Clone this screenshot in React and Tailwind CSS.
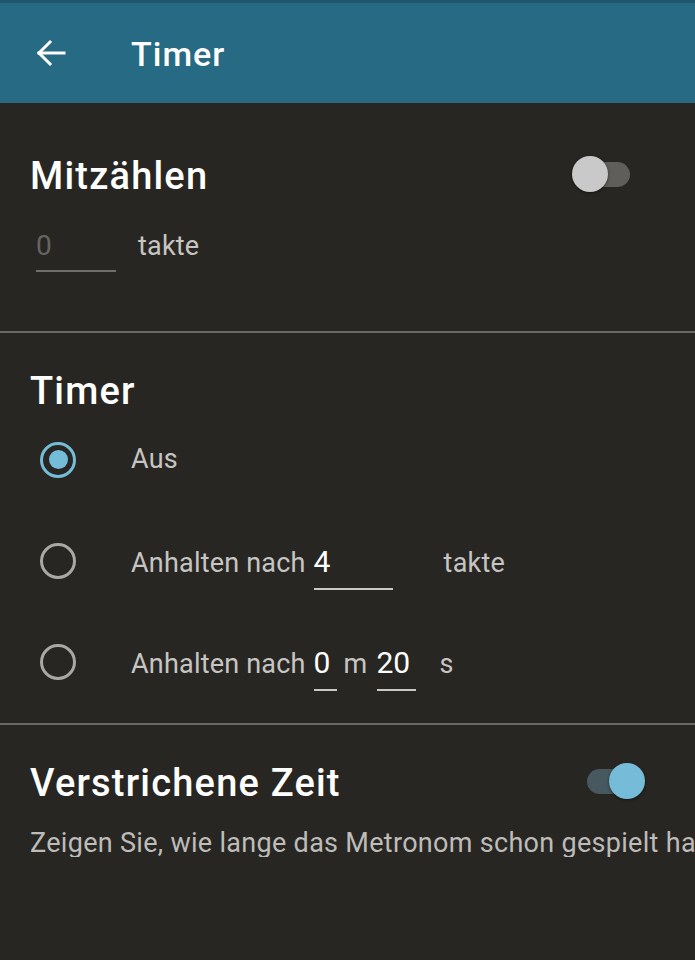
import React from "react";

function Radio({ checked }) {
  return (
    <div className="w-[36px] h-[36px] shrink-0 flex items-center justify-center">
      {checked ? (
        <div className="w-[36px] h-[36px] rounded-full border-[3.5px] border-[#74bdd9] flex items-center justify-center">
          <div className="w-[19px] h-[19px] rounded-full bg-[#74bdd9]" />
        </div>
      ) : (
        <div className="w-[36px] h-[36px] rounded-full border-[3.5px] border-[#a9a8a5]" />
      )}
    </div>
  );
}

const body = "text-[27px] leading-none text-[#c6c5c2] tracking-[0.2px]";
const title = "text-white text-[38px] font-medium leading-none tracking-[1.2px]";

export default function App() {
  return (
    <div
      className="w-[695px] h-[960px] bg-[#282622] overflow-hidden flex flex-col"
      style={{ fontFamily: "Roboto, 'Noto Sans', sans-serif" }}
    >
      {/* Header */}
      <div className="h-[103px] shrink-0 bg-[#266a83] border-t-[3px] border-[#1f566b] flex items-center">
        <div className="pl-[36px] w-[131px] flex items-center">
          <svg width="30" height="28" viewBox="0 0 30 28" fill="none" stroke="#ffffff" strokeWidth="3" strokeLinecap="square">
            <path d="M3 14 H28" />
            <path d="M14 3 L3 14 L14 25" strokeLinejoin="miter" />
          </svg>
        </div>
        <div className="text-white text-[34px] font-medium leading-none pt-[2px] tracking-[1px]">Timer</div>
      </div>

      {/* Section 1 */}
      <div className="shrink-0 pl-[30px] pt-[41px] pb-[59px]">
        <div className="h-[60px] flex items-center justify-between">
          <div className={title + " pt-[4px]"}>Mitzählen</div>
          <div className="relative w-[60px] h-[36px] mr-[63px]">
            <div className="absolute left-[3px] top-[6px] w-[55px] h-[25px] rounded-full bg-[#5f5e5b]" />
            <div className="absolute left-0 top-0 w-[36px] h-[36px] rounded-full bg-[#c9c9c9] shadow-[0_1px_3px_rgba(0,0,0,0.5)]" />
          </div>
        </div>
        <div className="mt-[28px] flex items-baseline">
          <div className="ml-[6px] w-[80px] border-b-2 border-[#6f6e6b] pb-[10px] text-[28px] leading-none text-[#656462]">0</div>
          <div className={"ml-[22px] " + body}>takte</div>
        </div>
      </div>
      <div className="h-[2px] shrink-0 bg-[#6a6865]" />

      {/* Section 2 */}
      <div className="shrink-0 pl-[30px] pt-[36px] pb-[11px]">
        <div className="h-[40px] flex items-center">
          <div className={title + " pt-[3px]"}>Timer</div>
        </div>
        <div className="h-[101px] flex items-center pl-[10px]">
          <Radio checked />
          <div className={"ml-[55px] " + body}>Aus</div>
        </div>
        <div className="h-[101px] flex items-center pl-[10px]">
          <Radio />
          <div className="ml-[55px] flex items-baseline pt-[16px]">
            <span className={body}>Anhalten nach</span>
            <span className="ml-[8px] w-[79px] border-b-2 border-[#c9c8c5] pb-[11px] text-[30px] text-white leading-none">4</span>
            <span className={"ml-[51px] " + body}>takte</span>
          </div>
        </div>
        <div className="h-[101px] flex items-center pl-[10px]">
          <Radio />
          <div className="ml-[55px] flex items-baseline pt-[16px]">
            <span className={body}>Anhalten nach</span>
            <span className="ml-[8px] w-[23px] border-b-2 border-[#c9c8c5] pb-[11px] text-[30px] text-white leading-none">0</span>
            <span className={"ml-[7px] " + body}>m</span>
            <span className="ml-[9px] w-[39px] border-b-2 border-[#c9c8c5] pb-[11px] text-[30px] text-white leading-none">20</span>
            <span className={"ml-[24px] " + body}>s</span>
          </div>
        </div>
      </div>
      <div className="h-[2px] shrink-0 bg-[#6a6865]" />

      {/* Section 3 */}
      <div className="shrink-0 pl-[30px] pt-[34px]">
        <div className="h-[44px] flex items-center justify-between">
          <div className={title + " pt-[4px]"}>Verstrichene Zeit</div>
          <div className="relative w-[60px] h-[36px] mr-[50px]">
            <div className="absolute left-[2px] top-[6px] w-[55px] h-[25px] rounded-full bg-[#48585f]" />
            <div className="absolute right-0 top-0 w-[36px] h-[36px] rounded-full bg-[#76bcd8] shadow-[0_1px_3px_rgba(0,0,0,0.5)]" />
          </div>
        </div>
        <div className="mt-[27px] text-[27px] leading-none text-[#bdbcb9] tracking-[0.3px] whitespace-nowrap overflow-hidden">
          Zeigen Sie, wie lange das Metronom schon gespielt hat
        </div>
      </div>
    </div>
  );
}
